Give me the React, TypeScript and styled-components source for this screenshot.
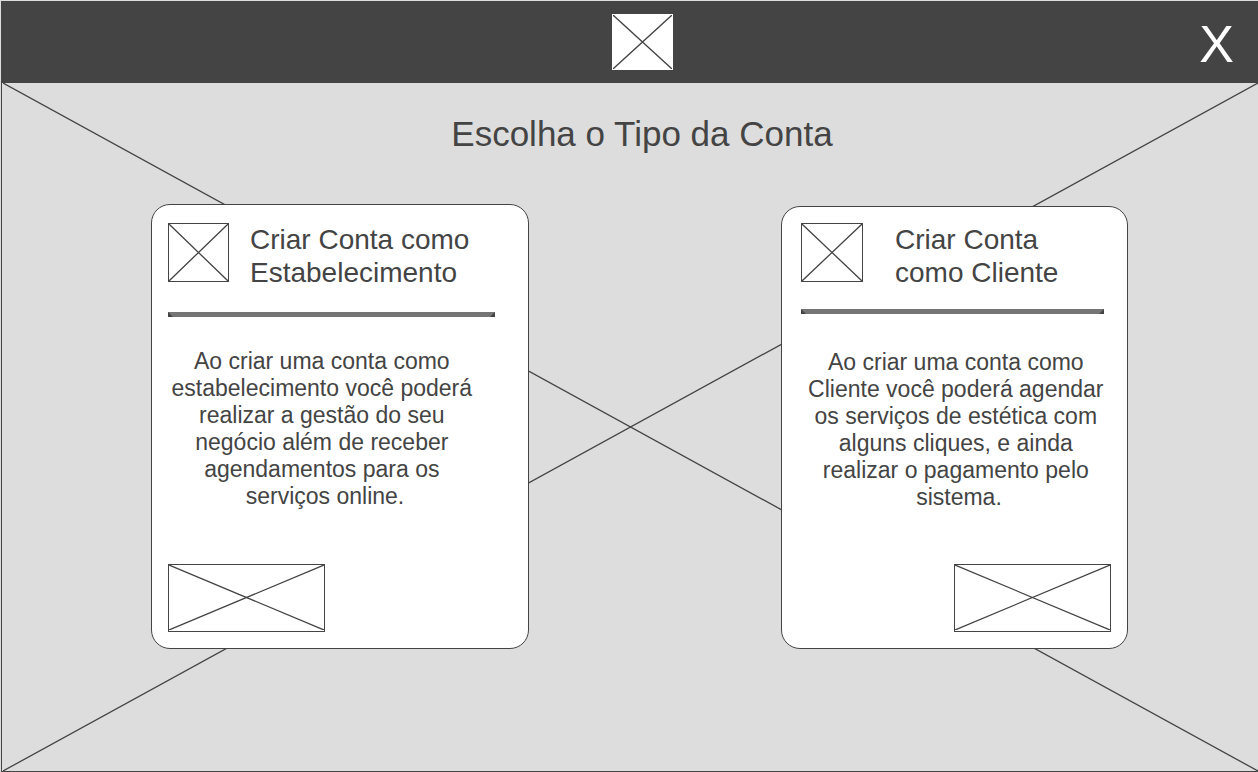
import React from "react";
import styled, { createGlobalStyle } from "styled-components";

const ink = "#444444";
const paper = "#dddddd";

const GlobalStyle = createGlobalStyle`
  *, *::before, *::after { box-sizing: border-box; }
  body {
    margin: 0;
    background: ${paper};
    color: ${ink};
    font-family: "Liberation Sans", Arial, Helvetica, sans-serif;
  }
`;

const Page = styled.div`
  display: flex;
  flex-direction: column;
  min-height: 100vh;
  padding: 1px 0 0 1px;
`;

const TopBar = styled.header`
  display: grid;
  grid-template-columns: 1fr auto 1fr;
  align-items: center;
  height: 82px;
  padding: 0 24px 0 50px;
  background: ${ink};
`;

const CloseButton = styled.button`
  grid-column: 3;
  justify-self: end;
  padding: 4px 0 0;
  border: 0;
  background: none;
  color: #ffffff;
  font: inherit;
  font-size: 52px;
  line-height: 60px;
  cursor: pointer;
`;

const Frame = styled.div<{ $width: number; $height: number; $line?: string }>`
  display: flex;
  flex: none;
  width: ${(p) => p.$width}px;
  height: ${(p) => p.$height}px;
  border: 1px solid ${(p) => p.$line ?? ink};
  background: #ffffff;
`;

const Logo = styled(Frame)`
  grid-column: 2;
`;

const ActionButton = styled.button<{ $end?: boolean }>`
  display: flex;
  align-self: ${(p) => (p.$end ? "flex-end" : "flex-start")};
  width: 157px;
  height: 68px;
  margin-top: auto;
  padding: 0 0 1px;
  border: 1px solid ${ink};
  background: #ffffff;
  cursor: pointer;
`;

const CrossSvg = styled.svg`
  display: block;
  width: 100%;
  height: 100%;
`;

const Main = styled.main`
  position: relative;
  flex: 1;
  border-left: 1px solid ${ink};
  border-bottom: 1px solid ${ink};
`;

const Backdrop = styled.div`
  position: absolute;
  inset: 0;
  padding-left: 1px;
`;

const Content = styled.div`
  position: relative;
`;

const PageTitle = styled.h1`
  margin: 0;
  padding: 31px 0 0 24px;
  font-size: 35px;
  line-height: 40px;
  font-weight: 400;
  text-align: center;
`;

const Cards = styled.div`
  display: grid;
  grid-template-columns: 378fr 347fr;
  column-gap: 252px;
  align-items: end;
  padding: 50px 130px 24px 149px;
`;

const Card = styled.section<{ $height: number; $padding: string }>`
  display: flex;
  flex-direction: column;
  min-height: ${(p) => p.$height}px;
  padding: ${(p) => p.$padding};
  border: 1px solid ${ink};
  border-radius: 19px;
  background: #ffffff;
`;

const CardHeader = styled.div<{ $gap: number }>`
  display: flex;
  align-items: flex-start;
  gap: ${(p) => p.$gap}px;
`;

const CardTitle = styled.h2<{ $maxWidth: number }>`
  max-width: ${(p) => p.$maxWidth}px;
  margin: 0;
  font-size: 28px;
  line-height: 33px;
  font-weight: 400;
`;

const Rule = styled.hr<{ $margin: string }>`
  align-self: stretch;
  height: 5px;
  margin: ${(p) => p.$margin};
  border: 0 solid ${ink};
  border-width: 5px 5px 0;
  border-top-color: #757575;
`;

const Description = styled.p<{ $padding: string }>`
  margin: 0;
  padding: ${(p) => p.$padding};
  font-size: 23px;
  line-height: 27px;
  text-align: center;
  white-space: break-spaces;
`;

function Cross() {
  return (
    <CrossSvg viewBox="0 0 100 100" preserveAspectRatio="none" aria-hidden="true">
      <path
        d="M0 0L100 100M100 0L0 100"
        fill="none"
        stroke={ink}
        strokeWidth="1.3"
        vectorEffect="non-scaling-stroke"
      />
    </CrossSvg>
  );
}

export default function App() {
  return (
    <>
      <GlobalStyle />
      <Page>
        <TopBar>
          <Logo $width={61} $height={56} $line="#ffffff">
            <Cross />
          </Logo>
          <CloseButton type="button">X</CloseButton>
        </TopBar>
        <Main>
          <Backdrop>
            <Cross />
          </Backdrop>
          <Content>
            <PageTitle>Escolha o Tipo da Conta</PageTitle>
            <Cards>
              <Card $height={445} $padding="18px 16px 16px">
                <CardHeader $gap={21}>
                  <Frame $width={61} $height={59}>
                    <Cross />
                  </Frame>
                  <CardTitle $maxWidth={260}>Criar Conta como Estabelecimento</CardTitle>
                </CardHeader>
                <Rule $margin="23px 17px 31px 0" />
                <Description $padding="0 30px 0 0">
                  Ao criar uma conta como estabelecimento você poderá realizar a gestão do seu negócio além de receber agendamentos para os serviços online.
                </Description>
                <ActionButton type="button" aria-label="Criar conta como estabelecimento">
                  <Cross />
                </ActionButton>
              </Card>
              <Card $height={443} $padding="16px 16px 16px 19px">
                <CardHeader $gap={32}>
                  <Frame $width={62} $height={59}>
                    <Cross />
                  </Frame>
                  <CardTitle $maxWidth={200}>Criar Conta como Cliente</CardTitle>
                </CardHeader>
                <Rule $margin="20px 7px 35px 0" />
                <Description $padding="0 0 0 6px">
                  Ao criar uma conta como Cliente você poderá agendar os serviços de estética com alguns cliques, e ainda realizar o pagamento pelo sistema.
                </Description>
                <ActionButton type="button" $end aria-label="Criar conta como cliente">
                  <Cross />
                </ActionButton>
              </Card>
            </Cards>
          </Content>
        </Main>
      </Page>
    </>
  );
}
